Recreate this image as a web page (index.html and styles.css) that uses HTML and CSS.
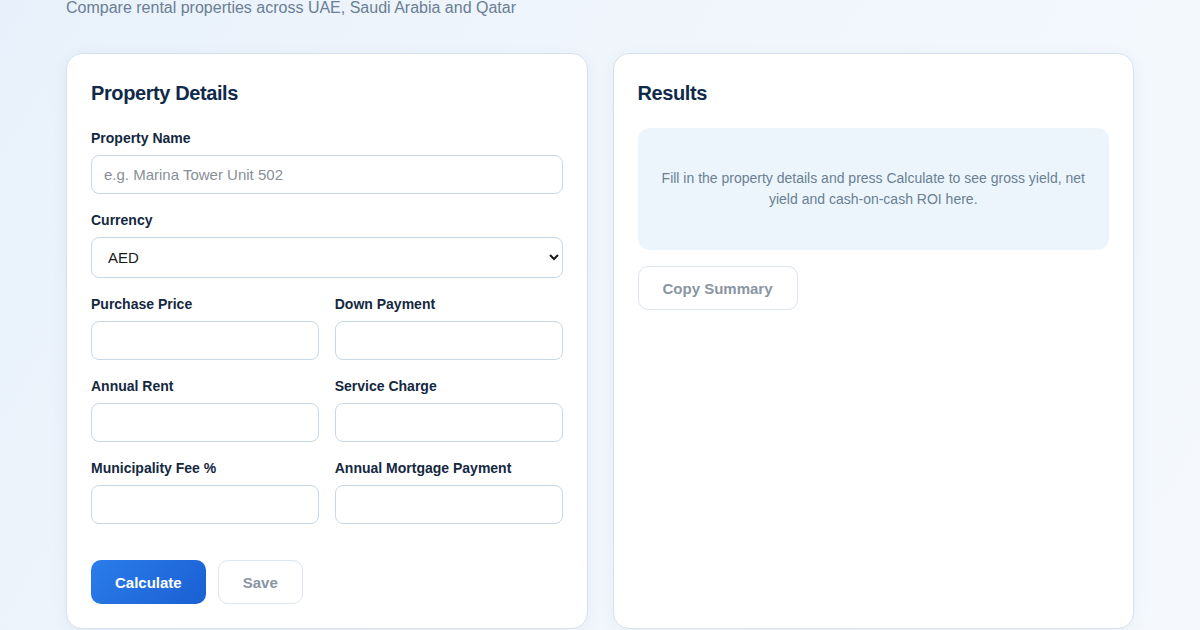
FILE: index.html
```html
<!DOCTYPE html>
<html lang="en">

<head>
    <meta charset="UTF-8">
    <meta name="viewport" content="width=device-width, initial-scale=1.0">
    <title>Rental Yield Calculator</title>
    <link rel="stylesheet" href="styles.css">
</head>

<body>
    <div class="page">
        <p class="subtitle">Compare rental properties across UAE, Saudi Arabia and Qatar</p>

        <div class="columns">
            <div class="card">
                <h2>Property Details</h2>

                <div class="form-group">
                    <label for="propName">Property Name</label>
                    <input type="text" id="propName" placeholder="e.g. Marina Tower Unit 502">
                </div>

                <div class="form-group">
                    <label for="currency">Currency</label>
                    <select id="currency">
                        <option>AED</option>
                        <option>SAR</option>
                        <option>QAR</option>
                    </select>
                </div>

                <div class="form-row">
                    <div class="form-group">
                        <label for="price">Purchase Price</label>
                        <input type="number" id="price">
                    </div>
                    <div class="form-group">
                        <label for="down">Down Payment</label>
                        <input type="number" id="down">
                    </div>
                    <div class="form-group">
                        <label for="rent">Annual Rent</label>
                        <input type="number" id="rent">
                    </div>
                    <div class="form-group">
                        <label for="service">Service Charge</label>
                        <input type="number" id="service">
                    </div>
                    <div class="form-group">
                        <label for="fee">Municipality Fee %</label>
                        <input type="number" id="fee">
                    </div>
                    <div class="form-group">
                        <label for="mortgage">Annual Mortgage Payment</label>
                        <input type="number" id="mortgage">
                    </div>
                </div>

                <div class="actions">
                    <button class="btn-primary">Calculate</button>
                    <button class="btn-outline">Save</button>
                </div>
            </div>

            <div class="card">
                <h2>Results</h2>
                <div class="results-empty">
                    Fill in the property details and press Calculate to see gross yield, net yield and cash-on-cash ROI here.
                </div>
                <button class="btn-outline">Copy Summary</button>
            </div>
        </div>
    </div>
</body>

</html>
```

FILE: styles.css
```css
* {
    box-sizing: border-box;
}

body {
    font-family: "Liberation Sans", Arial, sans-serif;
    margin: 0;
    padding: 0;
    height: 630px;
    overflow: hidden;
    background: linear-gradient(120deg, #e8f1fb 0%, #f1f6fc 50%, #f5f9fd 100%);
    color: #14283f;
}

.page {
    width: 1068px;
    margin: 0 auto;
}

.subtitle {
    margin: -2px 0 35px;
    font-size: 16px;
    line-height: 20px;
    color: #6b7e93;
}

.columns {
    display: grid;
    grid-template-columns: 1fr 1fr;
    gap: 25px;
}

.card {
    background: #fff;
    border: 1px solid #d5e2ed;
    border-radius: 16px;
    padding: 27px 24px 24px;
    height: 576px;
    box-shadow: 0 4px 16px rgba(30, 80, 140, 0.06);
}

.card h2 {
    margin: 0 0 23px;
    font-size: 20px;
    line-height: 24px;
    color: #0f2a4a;
    letter-spacing: -0.4px;
}

.form-group {
    margin-bottom: 16px;
}

label {
    display: block;
    margin-bottom: 7px;
    font-size: 14px;
    line-height: 20px;
    font-weight: bold;
    color: #14283f;
}

input[type="text"],
input[type="number"],
select {
    width: 100%;
    height: 39px;
    padding: 0 12px;
    border: 1px solid #c7d8e6;
    border-radius: 8px;
    font-family: inherit;
    font-size: 15px;
    color: #14283f;
    background: #fff;
}

input::placeholder {
    color: #8a8f96;
}

select {
    height: 41px;
    padding: 0 12px;
    color: #1a1a1a;
}

.form-row {
    display: grid;
    grid-template-columns: 1fr 1fr;
    column-gap: 16px;
}

.actions {
    display: flex;
    gap: 12px;
    margin-top: 20px;
}

button {
    height: 44px;
    padding: 0 24px;
    border-radius: 10px;
    font-family: inherit;
    font-size: 15px;
    font-weight: bold;
    cursor: pointer;
}

.btn-primary {
    background: linear-gradient(135deg, #2b7cec, #1a60d2);
    color: #fff;
    border: none;
}

.btn-outline {
    background: #fff;
    color: #8a95a2;
    border: 1px solid #dbe6ef;
}

.results-empty {
    background: #ecf5fc;
    border-radius: 12px;
    height: 122px;
    padding: 0 20px;
    margin-bottom: 16px;
    display: flex;
    align-items: center;
    justify-content: center;
    text-align: center;
    font-size: 14px;
    line-height: 21px;
    color: #6a7f93;
}
```
